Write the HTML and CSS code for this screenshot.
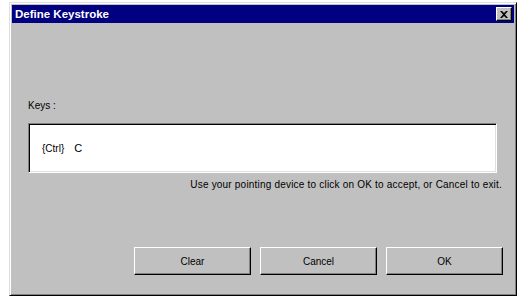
FILE: index.html
```html
<!DOCTYPE html>
<html>
<head>
<meta charset="utf-8">
<link rel="stylesheet" href="styles.css">
</head>
<body>
<div class="window">
  <div class="titlebar">
    <span class="title">Define Keystroke</span>
    <span class="close"><svg width="8" height="7" viewBox="0 0 8 7"><path d="M0 0h2l2 2 2-2h2L5 3.5 8 7H6L4 5 2 7H0l3-3.5z" fill="#000"/></svg></span>
  </div>
  <div class="content">
    <div class="label">Keys :</div>
    <div class="field"><span class="mod">{Ctrl}</span><span class="key">C</span></div>
    <div class="hint">Use your pointing device to click on OK to accept, or Cancel to exit.</div>
    <div class="buttons">
      <div class="btn">Clear</div>
      <div class="btn">Cancel</div>
      <div class="btn">OK</div>
    </div>
  </div>
</div>
</body>
</html>
```
FILE: styles.css
```css
html, body {
  margin: 0;
  padding: 0;
  background: #ffffff;
}
body {
  padding: 2px 0 0 9px;
  font-family: "Liberation Sans", Arial, sans-serif;
  font-size: 11px;
  color: #000;
}
.window {
  width: 508px;
  height: 294px;
  box-sizing: border-box;
  background: #c0c0c0;
  border-top: 1px solid #dfdfdf;
  border-left: 1px solid #dfdfdf;
  border-right: 1px solid #000;
  border-bottom: 1px solid #000;
  box-shadow: inset 1px 1px 0 #fff, inset -1px -1px 0 #808080;
  padding: 2px;
  display: flex;
  flex-direction: column;
}
.titlebar {
  height: 18px;
  background: #000080;
  display: flex;
  align-items: center;
  justify-content: space-between;
  padding: 0 2px 0 3px;
}
.title {
  color: #fff;
  font-weight: bold;
  font-size: 11.5px;
}
.close {
  width: 16px;
  height: 14px;
  box-sizing: border-box;
  background: #c0c0c0;
  border-top: 1px solid #fff;
  border-left: 1px solid #fff;
  border-right: 1px solid #000;
  border-bottom: 1px solid #000;
  box-shadow: inset -1px -1px 0 #808080;
  display: flex;
  align-items: center;
  justify-content: center;
}
.content {
  flex: 1;
  display: flex;
  flex-direction: column;
  padding: 0 11px 0 16px;
}
.label {
  margin-top: 76px;
  height: 13px;
  line-height: 13px;
  font-size: 10px;
  color: #000;
}
.field {
  margin-top: 11px;
  margin-right: 6px;
  height: 50px;
  box-sizing: border-box;
  background: #fff;
  border-top: 1px solid #808080;
  border-left: 1px solid #808080;
  border-right: 1px solid #fff;
  border-bottom: 1px solid #fff;
  box-shadow: inset 1px 1px 0 #000, inset -1px -1px 0 #dfdfdf;
  display: flex;
  align-items: center;
  padding-left: 13px;
  font-size: 11px;
}
.mod {
  font-size: 10px;
  margin-right: 10px;
}
.hint {
  margin-top: 5px;
  text-align: right;
  font-size: 10px;
  letter-spacing: 0.2px;
  line-height: 13px;
  margin-right: 1px;
}
.buttons {
  margin-top: 56px;
  display: flex;
  justify-content: flex-end;
  gap: 9px;
}
.btn {
  width: 117px;
  height: 28px;
  box-sizing: border-box;
  border-top: 1px solid #fff;
  border-left: 1px solid #fff;
  border-right: 1px solid #000;
  border-bottom: 1px solid #000;
  box-shadow: inset -1px -1px 0 #808080;
  display: flex;
  align-items: center;
  justify-content: center;
  font-size: 10px;
}
```
